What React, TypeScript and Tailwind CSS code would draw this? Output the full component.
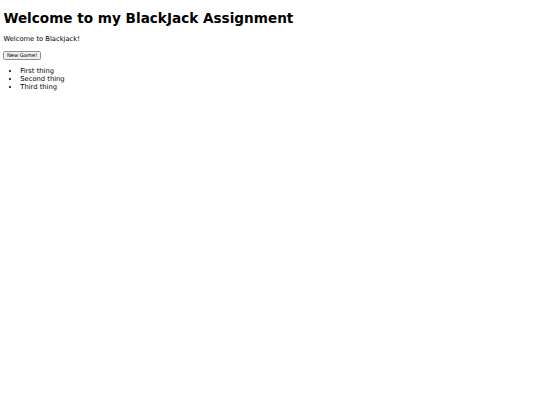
import React from 'react';

const items = ['First thing', 'Second thing', 'Third thing'];

export default function App() {
  return (
    <div className="min-h-[405px] bg-white px-[3.4px] pt-[11px] text-black text-[6.75px] leading-[7.86px] font-['DejaVu_Sans',sans-serif]">
      <h1 className="text-[13.6px] font-bold leading-[15.7px]">Welcome to my BlackJack Assignment</h1>
      <p className="mt-[9.5px]">Welcome to Blackjack!</p>
      <div className="mt-[6.75px]">
        <button className="rounded-[1.5px] border border-[#8f8f8f] bg-[#efefef] px-[2.5px] py-[0.5px] text-[5.2px] leading-[6.5px]">
          New Game!
        </button>
      </div>
      <ul className="mt-[7.5px] list-disc pl-[16.9px]">
        {items.map((t) => (
          <li key={t}>{t}</li>
        ))}
      </ul>
    </div>
  );
}
